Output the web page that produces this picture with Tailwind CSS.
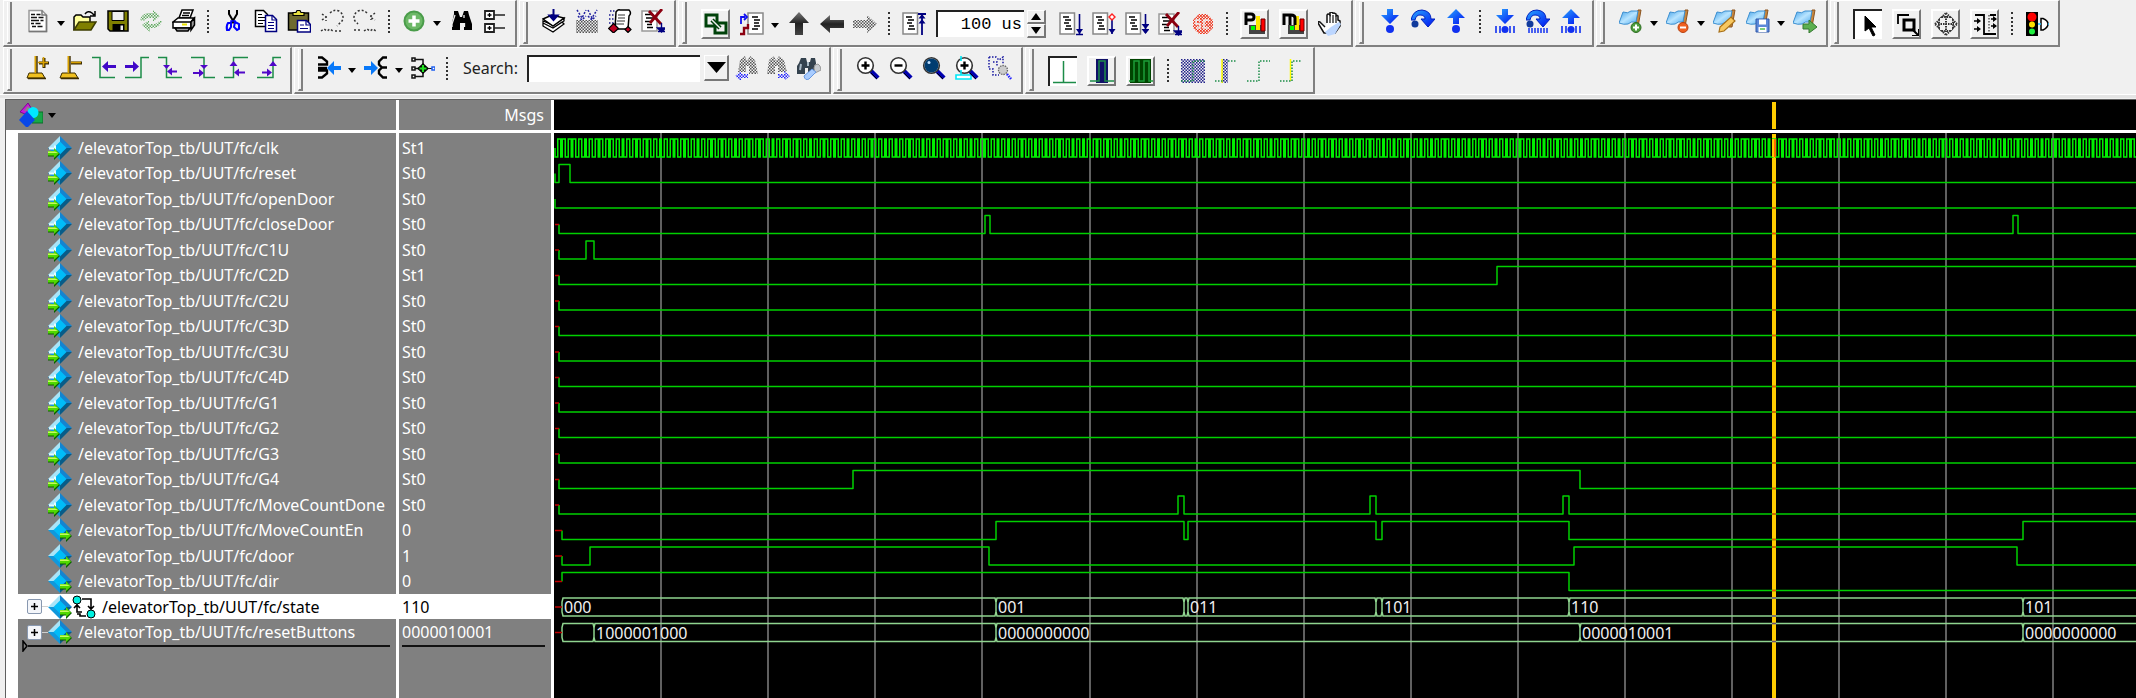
<!DOCTYPE html>
<html lang="en">

<head>
  <meta charset="UTF-8" />
  <meta name="viewport" content="width=device-width, initial-scale=1" />
  <title>Wave</title>
  <script src="https://cdn.jsdelivr.net/npm/@tailwindcss/browser@4"></script>
</head>

<body class="flex h-screen flex-col overflow-hidden bg-[#f0f0f0] font-['Noto_Sans','Open_Sans',sans-serif] text-black">

  <!-- Icon sprite -->
  <svg class="absolute size-0" xmlns="http://www.w3.org/2000/svg" aria-hidden="true">
    <defs>
      <pattern id="mesh" width="3" height="3" patternUnits="userSpaceOnUse"><path d="M0 0h1.5v1.5h-1.5zM1.5 1.5h1.5v1.5h-1.5z" fill="#555" /></pattern>
      <pattern id="meshBlue" width="3" height="3" patternUnits="userSpaceOnUse"><path d="M0 0h1.5v1.5h-1.5zM1.5 1.5h1.5v1.5h-1.5z" fill="#22228a" /></pattern>
      <pattern id="meshVivid" width="3" height="3" patternUnits="userSpaceOnUse"><path d="M0 0h1.5v1.5h-1.5zM1.5 1.5h1.5v1.5h-1.5z" fill="#2020ff" /></pattern>
      <pattern id="meshGreen" width="3" height="3" patternUnits="userSpaceOnUse"><path d="M0 0h1.5v1.5h-1.5zM1.5 1.5h1.5v1.5h-1.5z" fill="#5faa5f" /></pattern>
      <pattern id="meshRed" width="3" height="3" patternUnits="userSpaceOnUse"><path d="M0 0h1.8v1.8h-1.8zM1.5 1.5h1.5v1.5h-1.5z" fill="#f03820" /></pattern>
      <linearGradient id="steel" x1="0" y1="0" x2="0" y2="1"><stop offset="0" stop-color="#777" /><stop offset=".5" stop-color="#222" /><stop offset="1" stop-color="#444" /></linearGradient>
      <linearGradient id="azure" x1="0" y1="0" x2="1" y2="1"><stop offset="0" stop-color="#2aa8ff" /><stop offset="1" stop-color="#0010f0" /></linearGradient>
      <linearGradient id="sky" x1="0" y1="0" x2="1" y2="1"><stop offset="0" stop-color="#3c9ee8" /><stop offset=".5" stop-color="#b8e4ff" /><stop offset="1" stop-color="#4aa8ee" /></linearGradient>
    </defs>

    <symbol id="new" viewBox="0 0 24 24"><path d="M3 1.500h13l4.500 4.500v16.500h-17.500z" fill="#fff" stroke="#999" stroke-width="1.500" /><path d="M20.500 6v16.500h-17.500M16 1.500v4.500h4.500" fill="none" stroke="#777" stroke-width="1.500" /><path d="M5 5.500h4m1.500 0h4M5 8.500h6m1.500 0h5M5 11.500h8m1.500 0h3M5 14.500h3m1.500 0h5M6 17.500h4m1.500 0h5" stroke="#111" stroke-width="1.500" /></symbol>
    <symbol id="open" viewBox="0 0 24 24"><path d="M1 21v-13l2-2h5l2 2h7v5" fill="#ffff9c" stroke="#000" stroke-width="1.500" /><path d="M1 21l5-8h17l-5 8z" fill="#808000" stroke="#3c3c00" stroke-width="1.500" /><path d="M12 5q3-4 7-1l2 2M22 2v5h-5" fill="none" stroke="#000" stroke-width="1.500" /></symbol>
    <symbol id="save" viewBox="0 0 24 24"><path d="M2 2h20v20h-18l-2-2z" fill="#808000" stroke="#000" stroke-width="1.500" /><path d="M6 2.500h12v9h-12z" fill="#f0f0f0" stroke="#000" stroke-width="1" /><path d="M6.500 15h12v7h-12z" fill="#000" /><path d="M14.500 16.500h2.500v4.500h-2.500z" fill="#f0f0f0" /></symbol>
    <symbol id="reload" viewBox="0 0 24 24"><path d="M1 11q2-7 9-7h4v-3l7 6-7 6v-4h-3q-5 0-6 3zM23 12q-2 7-9 7h-3v4l-8-7 7-5v4h4q5 0 6-3z" fill="url(#meshGreen)" /></symbol>
    <symbol id="print" viewBox="0 0 24 24"><path d="M7 9l3-8h11l-3 8z" fill="#fff" stroke="#000" stroke-width="1.500" /><path d="M1 13l5-4h16l-3 4zM1 13h18v6h-18z" fill="#fff" stroke="#000" stroke-width="1.500" /><path d="M19 13l3.500-4v7l-3.500 5zM3 19h15l-2 3h-11z" fill="#999" stroke="#000" stroke-width="1.500" /><path d="M11 4h7m-8 2.500h7" stroke="#000" stroke-width="1.500" /><path d="M10 15.500h5" stroke="#e8e000" stroke-width="2" /></symbol>
    <symbol id="cut" viewBox="0 0 24 24"><path d="M8 1v4l6 10M16 1v4l-6 10" fill="none" stroke="#000" stroke-width="2" /><path d="M10 14v-2h4v2" fill="none" stroke="#00f" stroke-width="1.500" /><path d="M7 14h3v4l-2 3h-2q-1-4 1-7zM14 13l4 2v5l-2 1-3-3z" fill="none" stroke="#00f" stroke-width="2" /></symbol>
    <symbol id="copy" viewBox="0 0 24 24"><path d="M1.500 1.500h8l4 4v12h-12z" fill="#fff" stroke="#000" stroke-width="1.500" /><path d="M4 5.500h4m-4 3h7m-7 3h7m-7 3h5" stroke="#000" stroke-width="1.200" /><path d="M11.500 6.500h7l4 4v12h-11z" fill="#fff" stroke="#000080" stroke-width="1.500" /><path d="M18 7v4h4M14 13.500h6m-6 3h6m-6 3h6" fill="none" stroke="#000080" stroke-width="1.200" /></symbol>
    <symbol id="paste" viewBox="0 0 24 24"><path d="M1.500 4h20v17h-20z" fill="#6e6a30" stroke="#000" stroke-width="1.500" /><path d="M6 6.500v-3h3l1-2h3l1 2h3v3z" fill="#e8e040" stroke="#000" stroke-width="1.200" /><path d="M10.500 11.500h9l4 4v7.500h-13z" fill="#fff" stroke="#000080" stroke-width="1.500" /><path d="M19 12v4h4M13 16h4m-4 3.500h8" fill="none" stroke="#000080" stroke-width="1.200" /></symbol>
    <symbol id="undo" viewBox="0 0 24 24"><path d="M10 4q4-4 9-2 6 4 3 10l-5 5M2 5l4 3-4 3m4-4v5M1 22l3-2 3 2 3-2 3 2m2 0h8" fill="none" stroke="#333" stroke-width="1.500" stroke-dasharray="2 2" /></symbol>
    <symbol id="redo" viewBox="0 0 24 24"><path d="M14 4q-4-4-9-2-6 4-3 10l3 3M22 4l-5 4 5 3m-4-5v5M1 21h8m2 1l3-2 3 2 3-2 3 2" fill="none" stroke="#333" stroke-width="1.500" stroke-dasharray="2 2" /></symbol>
    <symbol id="add" viewBox="0 0 24 24"><circle cx="12" cy="12" r="9.500" fill="#6cb866" stroke="#4a9c4a" stroke-width="2" /><path d="M12 6.500v11m-5.500-5.500h11" stroke="#fff" stroke-width="3.500" /></symbol>
    <symbol id="find" viewBox="0 0 24 24"><path d="M5 2h4l2 6h2l2-6h4l1 4 3 9v6h-8v-7h-4v7h-8v-7l2-9z" fill="#000" /><path d="M6 6l-3 9v3M15 6v3M15.500 14v4" fill="none" stroke="#eee" stroke-width="1.300" /></symbol>
    <symbol id="tree" viewBox="0 0 24 24"><path d="M3 2h9v8h-9zM3 15h9v8h-9z" fill="#fff" stroke="#222" stroke-width="1.800" /><path d="M5.500 6h4m-2-2v4M5.500 19h4m-2-2v4" stroke="#000" stroke-width="1.300" /><path d="M12 6h11M12 19h11" stroke="#222" stroke-width="1.500" /></symbol>

    <symbol id="compile" viewBox="0 0 24 24"><path d="M1 17l10 6 11-8-2-2-9 6-10-5zM1 14l10 5 11-7v-3l-11 7-10-4z" fill="#fff" stroke="#000" stroke-width="1.300" /><path d="M1 10l9-4 12 3-11 8z" fill="#fff" stroke="#000" stroke-width="1.500" /><path d="M11.500 0v9M7.500 6.500l4 4.500 4-4.500z" stroke="#000080" stroke-width="2" fill="#000080" /></symbol>
    <symbol id="compileAll" viewBox="0 0 24 24"><path d="M1 11h22v13h-22z" fill="url(#mesh)" /><path d="M2 1l5 8 4-8m2 0l4 8 5-8M3 7l4 4 4-4m2 0l4 4 4-4" fill="none" stroke="#2020a0" stroke-width="1.500" stroke-dasharray="2 1.500" /></symbol>
    <symbol id="simulate" viewBox="0 0 24 24"><path d="M8 3q2-3 4-2h9q3 3 0 6l-1 13h-13z" fill="#fff" stroke="#000" stroke-width="1.500" /><path d="M10 6h7m-7 3h7m-8 3h8m-9 3h8" stroke="#333" stroke-width="1.200" /><path d="M2 2h5m-6 4h6m-6 4h5m-5 4h5" stroke="#1c1c90" stroke-width="1.500" stroke-dasharray="1.500 1.500" /><path d="M5.500 14.500l5 5-5 4.500-5-4.500zM20 17.500l3 3-3 3-3-3z" fill="#c00020" stroke="#000" stroke-width="1.200" /></symbol>
    <symbol id="breakSim" viewBox="0 0 24 24"><path d="M1 2h15v20h-15z" fill="#fff" stroke="#999" stroke-width="1.500" /><path d="M4 5.500h8m-7 3.500h7m-8 3.500h5m-3 3h5m-5 3h6" stroke="#000" stroke-width="1.600" /><path d="M8 2l12 13M21 0l-12 14" stroke="#8b0010" stroke-width="2.800" /><path d="M20.500 14v7M16.500 19h8l-4 4zM17 22.500h7" fill="#000080" stroke="#000080" stroke-width="1.400" /></symbol>
    <symbol id="link" viewBox="0 0 24 24"><path d="M2 3h11v11h-11z" fill="none" stroke="#00420a" stroke-width="3" /><path d="M11 11h11v10h-11z" fill="none" stroke="#00420a" stroke-width="3" /><path d="M8 8l8 8" stroke="#00420a" stroke-width="4.500" /><path d="M8 8l8 8" stroke="#f0f0f0" stroke-width="1.500" /></symbol>
    <symbol id="restart" viewBox="0 0 24 24"><path d="M8 1h15v21h-15z" fill="#fff" stroke="#888" stroke-width="1.500" /><path d="M12 5h6m-4 3h6m-6 3h5m-5 3h6m-8 3h6" stroke="#000" stroke-width="1.600" /><path d="M1 12v-7h4M4 2l3 3-3 3" fill="none" stroke="#1010f0" stroke-width="1.800" /><path d="M0 22h4v-6h4v-4" fill="none" stroke="#8b0010" stroke-width="2.400" /></symbol>
    <symbol id="up" viewBox="0 0 24 24"><path d="M12 0l10 11h-6v12h-8v-12h-6z" fill="url(#steel)" /></symbol>
    <symbol id="back" viewBox="0 0 24 24"><path d="M0 12l10-9v5h14v8h-14v5z" fill="url(#steel)" /></symbol>
    <symbol id="forward" viewBox="0 0 24 24"><path d="M24 12l-10-9v5h-14v8h14v5z" fill="url(#mesh)" /></symbol>
    <symbol id="sheet" viewBox="0 0 24 24"><path d="M1 1h14.500v21h-14.500z" fill="#fff" stroke="#888" stroke-width="1.500" /><path d="M4 5h6m-4 3h6m-7 3h5m-3 3h5m-6 3h7" stroke="#000" stroke-width="1.600" /></symbol>
    <symbol id="runStart" viewBox="0 0 24 24"><use href="#sheet" /><path d="M20 2v21M16 2h8" stroke="#000080" stroke-width="1.800" /><path d="M20 2l3.500 4.500h-7zM20 7l3.500 4.500h-7z" fill="#000080" /></symbol>
    <symbol id="run" viewBox="0 0 24 24"><use href="#sheet" /><path d="M20.500 2v21M17 22.500h7" stroke="#000080" stroke-width="1.600" /><path d="M20.500 22l3.500-5h-7z" fill="#000080" /></symbol>
    <symbol id="runNext" viewBox="0 0 24 24"><use href="#sheet" /><path d="M20 8v14" stroke="#000080" stroke-width="1.600" /><path d="M20 22l3.500-5h-7z" fill="#000080" /><path d="M20 2l3 3-3 3-3-3z" fill="#fff" stroke="#ff2020" stroke-width="1.400" /></symbol>
    <symbol id="runAll" viewBox="0 0 24 24"><use href="#sheet" /><path d="M20.500 2v19" stroke="#000080" stroke-width="1.600" /><path d="M20.500 17l4-5h-8zM20.500 22l4-5h-8z" fill="#000080" /></symbol>
    <symbol id="stop" viewBox="0 0 24 24"><path d="M8 2h8l6 6v8l-6 6h-8l-6-6v-8z" fill="url(#meshRed)" /><path d="M9 8h-4v4h4v4h-4M18 8h-5v8h5" fill="none" stroke="#f0f0f0" stroke-width="1.500" /></symbol>
    <symbol id="bars" viewBox="0 0 24 24"><path d="M6 13h16v9h-16z" fill="#444" /><path d="M8 14h4v4h-4z" fill="#0f0" /><path d="M13 4h4v14h-4z" fill="#ffe800" /><path d="M18 7h4v12h-4z" fill="#f00" stroke="#600" stroke-width="1" /></symbol>
    <symbol id="profile" viewBox="0 0 24 24"><use href="#bars" /><path d="M3 13v-11h5q3 0 3 3t-3 3h-5" fill="none" stroke="#000" stroke-width="3" /></symbol>
    <symbol id="memory" viewBox="0 0 24 24"><use href="#bars" /><path d="M2 13v-10h7q4 0 4 3v7M8 3v10" fill="none" stroke="#000" stroke-width="3" /></symbol>
    <symbol id="hand" viewBox="0 0 24 24"><path d="M7 15l-5-5q-2-1-2 1l6 10h11l5-7v-5l-2-1v-4q-2-2-2 1v-3q-3-2-3 0v-1q-3-2-3 0v2q-2-2-3 0v8" fill="#fff" stroke="#111" stroke-width="1.500" /><path d="M12 3v8m3-8v8m3-6v6" stroke="#111" stroke-width="1.200" /><path d="M7 20l6-5 8-5 2 2-6 10-7 2z" fill="#bcd6ff" /></symbol>

    <symbol id="stepInto" viewBox="0 0 24 24"><path d="M9 0h6v6h6l-9 9-9-9h6z" fill="url(#azure)" /><circle cx="12" cy="20" r="4" fill="#1030f0" /></symbol>
    <symbol id="stepOver" viewBox="0 0 24 24"><path d="M0 11q2-10 11-10 9 1 9 9h4l-7 8-7-8h4q0-4-5-4-4 0-5 5z" fill="url(#azure)" stroke="#0020c0" stroke-width="1" /><circle cx="4" cy="15" r="3.500" fill="#103a9c" /></symbol>
    <symbol id="stepOut" viewBox="0 0 24 24"><path d="M12 0l9 9h-6v6h-6v-6h-6z" fill="url(#azure)" /><circle cx="12" cy="20" r="4" fill="#1030f0" /></symbol>
    <symbol id="ticks" viewBox="0 0 24 24"><path d="M3 17v7m4-7v7m10-7v7m4-7v7" stroke="#1030f0" stroke-width="1.600" /><circle cx="12" cy="20.500" r="3.500" fill="#1030f0" /></symbol>
    <symbol id="intoAll" viewBox="0 0 24 24"><path d="M9 0h6v6h6l-9 9-9-9h6z" fill="url(#azure)" /><use href="#ticks" /></symbol>
    <symbol id="overAll" viewBox="0 0 24 24"><use href="#stepOver" /><path d="M3 19v5m3-5v5m3-5v5m3-5v5m3-5v5m3-5v5m3-5v5" stroke="#1030f0" stroke-width="1.500" /></symbol>
    <symbol id="outAll" viewBox="0 0 24 24"><path d="M12 0l9 9h-6v6h-6v-6h-6z" fill="url(#azure)" /><use href="#ticks" /></symbol>

    <symbol id="flag" viewBox="0 0 24 24"><path d="M19 1h3l-3 17h-3z" fill="#c8863c" stroke="#8a5420" stroke-width="1" /><path d="M4 3q5 2 8-1h7l-2 11q-5-1-8 2-4 1-9-1z" fill="url(#sky)" stroke="#3c8fd0" stroke-width="1" /></symbol>
    <symbol id="flagAdd" viewBox="0 0 24 24"><use href="#flag" /><circle cx="17" cy="18.500" r="5" fill="#4c9c3c" stroke="#2c6c20" stroke-width="1" /><path d="M17 15.500v6m-3-3h6" stroke="#fff" stroke-width="2" /></symbol>
    <symbol id="flagRemove" viewBox="0 0 24 24"><use href="#flag" /><circle cx="17" cy="18.500" r="5" fill="#f06020" stroke="#b84010" stroke-width="1" /><path d="M14 18.500h6" stroke="#fff" stroke-width="2" /></symbol>
    <symbol id="flagEdit" viewBox="0 0 24 24"><use href="#flag" /><path d="M6 23l1-5 11-10 4 4-11 10z" fill="#f8c860" stroke="#a87018" stroke-width="1.200" /></symbol>
    <symbol id="flagSave" viewBox="0 0 24 24"><use href="#flag" /><path d="M10 10h13v13h-13z" fill="#5c88d8" stroke="#3058a8" stroke-width="1" /><path d="M13 10.500h7v5h-7zM12.500 18h8v5h-8z" fill="#fff" /><path d="M14 20h5" stroke="#50c050" stroke-width="1.500" /></symbol>
    <symbol id="flagGo" viewBox="0 0 24 24"><use href="#flag" /><path d="M10 15h6v-4l8 7-8 6v-4h-6z" fill="#5cb050" stroke="#347830" stroke-width="1" /></symbol>

    <symbol id="pointer" viewBox="0 0 24 24"><path d="M8 3v15l4-3 4 8 2-1-4-8h5z" fill="#000" stroke="#000" stroke-width="1" /></symbol>
    <symbol id="zoomMode" viewBox="0 0 24 24"><path d="M3 12v-9h11" fill="none" stroke="#000" stroke-width="1.800" /><path d="M9 8h10v10h-10z" fill="none" stroke="#000" stroke-width="3" /><path d="M17 17l6 6M24 17v7h-7" fill="none" stroke="#000" stroke-width="2" /></symbol>
    <symbol id="panMode" viewBox="0 0 24 24"><path d="M12 1l4 4h-8zM12 23l4-4h-8zM1 12l4-4v8zM23 12l-4-4v8zM12 4v16M4 12h16" fill="none" stroke="#333" stroke-width="2" stroke-dasharray="1.500 1" /></symbol>
    <symbol id="twoMode" viewBox="0 0 24 24"><path d="M2 3h9v19h12M17 3h6" fill="none" stroke="#000" stroke-width="1.800" /><path d="M16 3v18" stroke="#555" stroke-width="1.500" stroke-dasharray="1.500 1.500" /><path d="M1 9h5M1 17h5M18 7h5M18 14h5" stroke="#000" stroke-width="1.600" /><path d="M4 6l4 3-4 3zM4 14l4 3-4 3zM20 4l4 3-4 3zM20 11l4 3-4 3z" fill="#000" /></symbol>
    <symbol id="traffic" viewBox="0 0 24 24"><path d="M1 0h12v24h-12z" fill="#000" /><circle cx="7" cy="5" r="4.500" fill="#f00" /><circle cx="7" cy="12.500" r="3" fill="#ffe000" /><circle cx="7" cy="19.500" r="3" fill="#20f040" /><path d="M16 6.500h2q5 2 5 5.500t-5 6h-2z" fill="#fff" stroke="#000" stroke-width="1.500" /><path d="M13 12h3m7 0h1" stroke="#20c0ff" stroke-width="1.500" /></symbol>

    <symbol id="cursorBase" viewBox="0 0 24 24"><path d="M3 17h13l3 5h-18z" fill="#f0c020" stroke="#3c2c00" stroke-width="1" /><path d="M9.500 0v17" stroke="#d8a000" stroke-width="2" /><path d="M11 0v17M2 22.500h18" stroke="#3c2c00" stroke-width="1.400" /></symbol>
    <symbol id="cursorAdd" viewBox="0 0 24 24"><use href="#cursorBase" /><path d="M13 7h10M18 2v10" stroke="#3c2c00" stroke-width="3" /><path d="M12 6.500h10M17.500 1v10" stroke="#d8a000" stroke-width="1.600" /></symbol>
    <symbol id="cursorDel" viewBox="0 0 24 24"><use href="#cursorBase" /><path d="M12 7h11" stroke="#3c2c00" stroke-width="3" /><path d="M12 6.500h10" stroke="#d8a000" stroke-width="1.600" /></symbol>
    <symbol id="prevEdge" viewBox="0 0 24 24"><path d="M0 1.500h8v20h15" fill="none" stroke="#1c8c48" stroke-width="1.500" /><path d="M10 10.500l6-5.500v4h8v3h-8v4z" fill="#4008c8" /></symbol>
    <symbol id="nextEdge" viewBox="0 0 24 24"><path d="M0 21.500h16v-20h8" fill="none" stroke="#1c8c48" stroke-width="1.500" /><path d="M14 10.500l-6-5.500v4h-8v3h8v4z" fill="#4008c8" /></symbol>
    <symbol id="prevFall" viewBox="0 0 24 24"><path d="M0 1.500h8.500v20h15.500" fill="none" stroke="#1c8c48" stroke-width="1.500" /><path d="M8.500 13l-3.500-4h7zM9 15.500l5-4v3h5v2h-5v3z" fill="#5008c8" /></symbol>
    <symbol id="nextFall" viewBox="0 0 24 24"><path d="M0 1.500h13v20h11" fill="none" stroke="#1c8c48" stroke-width="1.500" /><path d="M13 13l-4-4h8zM13 17l-5-4v3h-6v2h6v3z" fill="#5008c8" /></symbol>
    <symbol id="prevRise" viewBox="0 0 24 24"><path d="M0 21.500h9.500v-20h14.500" fill="none" stroke="#1c8c48" stroke-width="1.500" /><path d="M9.500 5l4 5h-8zM10 16.500l5-4v3h6v2h-6v3z" fill="#5008c8" /></symbol>
    <symbol id="nextRise" viewBox="0 0 24 24"><path d="M0 21.500h16v-20h8" fill="none" stroke="#1c8c48" stroke-width="1.500" /><path d="M16 5l4 5h-8zM15 16.500l-5-4v3h-5v2h5v3z" fill="#5008c8" /></symbol>
    <symbol id="drivers" viewBox="0 0 24 24"><path d="M1 1.500h4l5 4v3h-9M1 21.500h4l5-4v-3h-9M1 12h9" fill="none" stroke="#000" stroke-width="2.400" /><path d="M10 12l7-7v5h7v4h-7v5z" fill="#0878f8" /></symbol>
    <symbol id="readers" viewBox="0 0 24 24"><path d="M23 1.500h-4l-4 4v3l3 3h5M23 21.500h-4l-4-4v-3l3-3" fill="none" stroke="#000" stroke-width="2.400" /><path d="M14 12l-7-7v5h-7v4h7v5z" fill="#0878f8" /></symbol>
    <symbol id="expand" viewBox="0 0 24 24"><path d="M1 2h3v3h-3zM1 11h3v3h-3zM1 19h3v3h-3zM4 3.500h8v17h-8M4 12.500h7" fill="none" stroke="#111" stroke-width="1.500" /><path d="M12 7l6 5.500-6 5.500-6-5.500z" fill="#000" /><path d="M12 9v7m-3.500-3.500h7" stroke="#20e020" stroke-width="2.200" /><path d="M17 12.500h4" stroke="#111" /><path d="M21 11h3v3h-3z" fill="#fff" stroke="#2060f0" stroke-width="1.500" /></symbol>
    <symbol id="findPrev" viewBox="0 0 24 24"><path d="M5 4l5-4 2 5 3-5 5 4 3 14h-9v-8h-3v6h-8z" fill="url(#mesh)" /><path d="M0 20l6-5v3h7v4h-7v3z" fill="url(#meshVivid)" /></symbol>
    <symbol id="findNext" viewBox="0 0 24 24"><path d="M3 4l5-4 2 5 3-5 5 4 3 12h-9v-6h-3v8h-8z" fill="url(#mesh)" /><path d="M24 20l-6-5v3h-6v4h6v3z" fill="url(#meshVivid)" /></symbol>
    <symbol id="findOpts" viewBox="0 0 24 24"><path d="M4 2h5l1 4h3l1-4h4l1 5v9h-8v-4h-3v6h-8v-8l2-3z" fill="#34424e" /><path d="M4 8l-1 6m8-8v4" stroke="#a8b8c4" stroke-width="2" /><path d="M17 12q0-4 4-4l2 2 1 4-6 3z" fill="#c8ccd0" stroke="#999" stroke-width="1" /><path d="M7 20l8-7 4 3-7 7q-4 2-5-3z" fill="#a8ccff" stroke="#6898e0" stroke-width="1" /></symbol>
    <symbol id="lens" viewBox="0 0 24 24"><path d="M15 15l7 7" stroke="#0000b0" stroke-width="4.500" /><path d="M15 17l6 6" stroke="#000" stroke-width="1" /><circle cx="9.500" cy="9.500" r="7.800" fill="#fff" stroke="#333" stroke-width="1.600" /></symbol>
    <symbol id="zoomIn" viewBox="0 0 24 24"><use href="#lens" /><path d="M9.500 5.500v8m-4-4h8" stroke="#000" stroke-width="2.400" /></symbol>
    <symbol id="zoomOut" viewBox="0 0 24 24"><use href="#lens" /><path d="M5.500 9.500h8" stroke="#000" stroke-width="2.400" /></symbol>
    <symbol id="zoomFull" viewBox="0 0 24 24"><use href="#lens" /><circle cx="9.500" cy="9.500" r="7" fill="#003c70" /><circle cx="7" cy="6.500" r="1.500" fill="#c0e0ff" /></symbol>
    <symbol id="zoomCursor" viewBox="0 0 24 24"><path d="M1 19h15v4h-15z" fill="#fff" stroke="#00e8f8" stroke-width="1.600" /><use href="#lens" /><path d="M9.500 5.500v8m-4-4h8" stroke="#000" stroke-width="2.400" /><path d="M6 0v5m0 9v5" stroke="#00e8f8" stroke-width="1.600" /></symbol>
    <symbol id="zoomOther" viewBox="0 0 24 24"><path d="M1 1h7l3 3 4-3v7M1 1v12h4v6h6M5 6h4v5" fill="none" stroke="#1818a0" stroke-width="1.500" stroke-dasharray="1.500 1.500" /><circle cx="15" cy="14" r="4.500" fill="#ccc" stroke="#666" stroke-width="1.300" stroke-dasharray="1.500 1" /><path d="M19 18l4 5" stroke="#2020ff" stroke-width="2.500" stroke-dasharray="1.500 1" /></symbol>

    <symbol id="waveLine" viewBox="0 0 24 24"><path d="M11.500 1v21M1 22.500h23" stroke="#1c8c48" stroke-width="1.500" /></symbol>
    <symbol id="waveBlue" viewBox="0 0 24 24"><path d="M6 0h12v24h-12z" fill="#101068" /><path d="M0 22h9v-20h6v20h9" fill="none" stroke="#1c8c48" stroke-width="1.500" /></symbol>
    <symbol id="waveGreen" viewBox="0 0 24 24"><path d="M1 0h21v24h-21z" fill="#004400" /><path d="M0 22h5v-20h5v20h5v-20h5v20h4" fill="none" stroke="#1c9c38" stroke-width="1.500" /></symbol>
    <symbol id="patBlock" viewBox="0 0 24 24"><path d="M0 0h24v24h-24z" fill="url(#meshBlue)" /><path d="M0 22h12v-20h12" fill="none" stroke="#1c8c48" stroke-width="1.500" stroke-dasharray="1.500 1.500" /></symbol>
    <symbol id="patStrip" viewBox="0 0 24 24"><path d="M8 0h6v24h-6z" fill="url(#meshBlue)" /><path d="M8 0v24" stroke="#ffff00" stroke-width="1.500" /><path d="M1 22h8M14 2h8" fill="none" stroke="#1c8c48" stroke-width="1.500" stroke-dasharray="1.500 1.500" /></symbol>
    <symbol id="patStep" viewBox="0 0 24 24"><path d="M0 22h12v-20h11" fill="none" stroke="#1c8c48" stroke-width="1.500" stroke-dasharray="1.500 1.500" /></symbol>
    <symbol id="patEdge" viewBox="0 0 24 24"><path d="M10.500 0v22" stroke="#ffff00" stroke-width="1.500" /><path d="M0 22h12v-20h10" fill="none" stroke="#1c8c48" stroke-width="1.500" stroke-dasharray="1.500 1.500" /></symbol>

    <symbol id="diamond" viewBox="0 0 24 24"><path d="M12 0l12 12h-12z" fill="#1484d0" /><path d="M12 0v12h-12z" fill="#a8e4f8" /><path d="M12 24l12-12h-12z" fill="#085c88" /><path d="M12 24l-12-12h12z" fill="#1098dc" /><path d="M12 5.500l6.500 6.500-6.500 6.500-6.500-6.500z" fill="#00bcf8" /></symbol>
    <symbol id="smallArrow" viewBox="0 0 12 12"><path d="M0 3.500h6v-3l6 5.500-6 6v-3.500h-6z" fill="#0a5c00" /><path d="M0 3h6v-3l5 5.500-5 4.500v-2.500h-6z" fill="#50d800" /><path d="M0 3.500h7l3 1.500h-10z" fill="#c8f860" /></symbol>
    <symbol id="portIn" viewBox="0 0 24 24"><use href="#diamond" /><path d="M1 12.500h6v-3" stroke="#e8fcff" stroke-width="2" fill="none" /><use href="#smallArrow" x="0" y="12" width="12" height="12" /></symbol>
    <symbol id="portOut" viewBox="0 0 24 24"><use href="#diamond" /><use href="#smallArrow" x="12" y="12" width="12" height="12" /></symbol>
    <symbol id="fsm" viewBox="0 0 24 24"><path d="M5 9v8h5m-8-4l3-3 3 3M10 4h9v10m-3-3l3 3 3-3M5 19h3v2h6" fill="none" stroke="#000" stroke-width="1.600" /><circle cx="5" cy="5" r="4" fill="#00f0e0" stroke="#000" stroke-width="1" /><circle cx="19" cy="19" r="4" fill="#00f0e0" stroke="#000" stroke-width="1" /></symbol>
    <symbol id="objects" viewBox="0 0 24 24"><path d="M1 9l8-9 5 8-8 3z" fill="#c818d8" stroke="#7c0890" stroke-width="1" /><path d="M5 8l4-5 3 4z" fill="#888" /><path d="M13 9h11v11h-11z" fill="#18a848" stroke="#0a6c28" stroke-width="1" /><circle cx="14" cy="9.500" r="5.500" fill="#00e8ff" /><path d="M8 8l8 9-8 8-8-8z" fill="#0848e8" /></symbol>
  </svg>

  <!-- Toolbars -->
  <div id="toolbars" class="shrink-0 pl-[3px]"></div>
  <div class="mb-px h-[4px] shrink-0 border-t border-white bg-[#e4e4e4]"></div>

  <!-- Wave window -->
  <main class="ml-[5px] flex min-h-0 flex-1 border-t border-l border-[#606060] bg-[#808080]">

    <div class="flex w-[548px] shrink-0 flex-col">
      <table class="w-full table-fixed border-separate border-spacing-0 text-left text-[16px] leading-5 whitespace-nowrap text-white">
        <colgroup>
          <col class="w-[12px]" />
          <col class="w-[381px]" />
          <col />
        </colgroup>
        <thead>
          <tr class="h-[33px]">
            <th colspan="2" class="border-r-[3px] border-b-[3px] border-white p-0 pl-[13px]">
              <button class="flex items-center gap-[5px]" aria-label="Window menu">
                <svg class="size-6"><use href="#objects" /></svg>
                <svg class="h-[5px] w-[8px]" viewBox="0 0 8 5"><path d="M0 0h8l-4 5z" /></svg>
              </button>
            </th>
            <th class="border-r-[3px] border-b-[3px] border-white p-0 pr-[7px] text-right font-normal">Msgs</th>
          </tr>
          <tr class="h-[2px]">
            <td class="bg-white p-0"></td>
            <td class="border-r-[3px] border-white p-0"></td>
            <td class="border-r-[3px] border-white p-0"></td>
          </tr>
        </thead>
        <tbody id="signals"></tbody>
      </table>

      <!-- Insertion marker, on the lower edge of the last signal -->
      <div class="flex flex-1">
        <div class="w-[12px] bg-white"></div>
        <div class="w-[381px] border-r-[3px] border-white">
          <div class="-mt-[5px] mr-[6px] ml-[4px] flex items-center">
            <svg class="h-[12px] w-[6px]" viewBox="0 0 6 12"><path d="M1 1l4 5-4 5z" fill="none" stroke="#000" stroke-width="1.500" /></svg>
            <div class="h-[2px] flex-1 bg-[#111]"></div>
          </div>
        </div>
        <div class="flex-1 border-r-[3px] border-white">
          <div class="mr-[6px] ml-[3px] h-[2px] bg-[#111]"></div>
        </div>
      </div>
    </div>

    <section class="flex min-w-0 flex-1 flex-col bg-black">
      <svg id="ruler" class="h-[30px] w-full shrink-0"></svg>
      <div class="h-[3px] shrink-0 bg-white"></div>
      <svg id="wave" class="min-h-0 w-full flex-1 font-['Noto_Sans','Open_Sans',sans-serif] text-[16px]"></svg>
    </section>
  </main>

  <script>
    // '|' separator, 'v' drop-down arrow, '^x' raised button, '_x' pressed button
    const toolbars = [
      [
        ['new', 'v', 'open', 'save', 'reload', 'print', '|', 'cut', 'copy', 'paste', 'undo', 'redo', '|', 'add', 'v', 'find', 'tree'],
        ['compile', 'compileAll', 'simulate', 'breakSim'],
        ['^link', 'restart', 'v', 'up', 'back', 'forward', '|', 'runStart', 'RUNLENGTH', 'run', 'runNext', 'runAll', 'breakSim', 'stop', '|', '^profile', '^memory', 'hand'],
        ['stepInto', 'stepOver', 'stepOut', '|', 'intoAll', 'overAll', 'outAll'],
        ['flagAdd', 'v', 'flagRemove', 'v', 'flagEdit', 'flagSave', 'v', 'flagGo'],
        ['_pointer', '^zoomMode', '^panMode', '^twoMode', '|', 'traffic'],
      ],
      [
        ['cursorAdd', 'cursorDel', 'prevEdge', 'nextEdge', 'prevFall', 'nextFall', 'prevRise', 'nextRise'],
        ['drivers', 'v', 'readers', 'v', 'expand', '|', 'SEARCH', 'findPrev', 'findNext', 'findOpts'],
        ['zoomIn', 'zoomOut', 'zoomFull', 'zoomCursor', 'zoomOther'],
        ['_waveLine', '^waveBlue', '^waveGreen', '|', 'patBlock', 'patStrip', 'patStep', 'patEdge'],
      ],
    ];

    const runLength = `
      <input aria-label="Run length" value="100 us" class="ml-[6px] h-[27px] w-[88px] border-t-2 border-l-2 border-[#222] bg-white pr-[2px] text-right font-['Liberation_Mono',monospace] text-[17px] outline-none" />
      <span class="mr-[8px] ml-[3px] flex h-[28px] w-[19px] flex-col">
        <button aria-label="Increase" class="grid flex-1 place-items-center border-t border-r-2 border-b-2 border-l border-t-white border-r-[#777] border-b-[#777] border-l-white"><svg class="h-[7px] w-[10px]" viewBox="0 0 10 7"><path d="M5 0l5 7h-10z" /></svg></button>
        <button aria-label="Decrease" class="grid flex-1 place-items-center border-t border-r-2 border-b-2 border-l border-t-white border-r-[#777] border-b-[#777] border-l-white"><svg class="h-[7px] w-[10px]" viewBox="0 0 10 7"><path d="M5 7l5-7h-10z" /></svg></button>
      </span>`;

    const search = `
      <label for="search" class="ml-[8px] w-[64px] text-[16px] leading-6 text-[#222]">Search:</label>
      <input id="search" class="h-[27px] w-[173px] border-t-2 border-l-2 border-[#222] bg-white px-1 text-[16px] outline-none" />
      <button aria-label="Search history" class="mr-[2px] ml-[4px] grid h-[26px] w-[25px] place-items-center border-t border-r-2 border-b-2 border-l border-t-white border-r-[#777] border-b-[#777] border-l-white"><svg class="h-[11px] w-[19px]" viewBox="0 0 19 11"><path d="M0 0h19l-9.500 11z" /></svg></button>`;

    function toolItem(item) {
      if (item === '|') return '<span class="flex h-[23px] w-[16px] justify-center"><span class="border-l-2 border-dotted border-[#333]"></span></span>';
      if (item === 'v') return '<button aria-label="More" class="grid w-[14px] place-items-center pt-1"><svg class="h-[5px] w-[8px]" viewBox="0 0 8 5"><path d="M0 0h8l-4 5z" /></svg></button>';
      if (item === 'RUNLENGTH') return runLength;
      if (item === 'SEARCH') return search;
      const name = item.replace(/^[\^_]/, '');
      const icon = `<svg class="size-6"><use href="#${name}" /></svg>`;
      if (item[0] === '^') return `<button aria-label="${name}" class="mx-[5px] grid h-[30px] w-[29px] place-items-center border-t-2 border-r-2 border-b-2 border-l-2 border-t-white border-r-[#777] border-b-[#777] border-l-white">${icon}</button>`;
      if (item[0] === '_') return `<button aria-label="${name}" aria-pressed="true" class="mx-[5px] grid h-[30px] w-[29px] place-items-center border-t-2 border-l-2 border-[#222] bg-white">${icon}</button>`;
      return `<button aria-label="${name}" class="${/^find./.test(name) ? 'w-[31px]' : 'w-[33px]'} grid place-items-center">${icon}</button>`;
    }

    document.getElementById('toolbars').innerHTML = toolbars.map(row => `
      <div class="flex gap-[2px]">
        ${row.map(group => {
          const tall = group.some(i => /^[\^_]/.test(i));
          return `
          <div role="toolbar" class="flex h-[47px] shrink-0 border-t border-r-2 border-b-2 border-l border-t-white border-r-[#808080] border-b-[#808080] border-l-white pr-[5px]">
            <span class="mt-px mr-[9px] ml-[3px] h-[42px] w-[5px] border-r-2 border-b-2 border-l border-r-[#808080] border-b-[#808080] border-l-white"></span>
            <div class="${tall ? 'mt-[7px] h-[31px]' : 'mt-[6px] h-[28px]'} flex items-center">${group.map(toolItem).join('')}</div>
          </div>`;
        }).join('')}
      </div>`).join('');

    // x: end of the unknown part (red), start: first x of a signal without one, flips: x of every change
    const signals = [
      { name: 'clk', value: 'St1', clock: true },
      { name: 'reset', value: 'St0', start: 1, flips: [5, 16] },
      { name: 'openDoor', value: 'St0', start: 1, flips: [] },
      { name: 'closeDoor', value: 'St0', x: 5, flips: [431, 436, 1459, 1464] },
      { name: 'C1U', value: 'St0', x: 5, flips: [32, 40] },
      { name: 'C2D', value: 'St1', x: 5, flips: [943] },
      { name: 'C2U', value: 'St0', x: 5, flips: [] },
      { name: 'C3D', value: 'St0', x: 5, flips: [] },
      { name: 'C3U', value: 'St0', x: 5, flips: [] },
      { name: 'C4D', value: 'St0', x: 5, flips: [] },
      { name: 'G1', value: 'St0', x: 5, flips: [] },
      { name: 'G2', value: 'St0', x: 5, flips: [] },
      { name: 'G3', value: 'St0', x: 5, flips: [] },
      { name: 'G4', value: 'St0', x: 5, flips: [299, 1026] },
      { name: 'MoveCountDone', value: 'St0', x: 5, flips: [624, 630, 816, 822, 1009, 1015] },
      { name: 'MoveCountEn', value: '0', out: true, x: 8, flips: [442, 630, 634, 822, 828, 1015, 1469] },
      { name: 'door', value: '1', out: true, x: 8, flips: [36, 435, 1020, 1463] },
      { name: 'dir', value: '0', out: true, x: 8, high: true, flips: [1015] },
      { name: 'state', value: '110', out: true, selected: true, bus: [[8, '000'], [442, '001'], [630, ''], [634, '011'], [822, ''], [828, '101'], [1015, '110'], [1469, '101']] },
      { name: 'resetButtons', value: '0000010001', out: true, bus: [[8, ''], [40, '1000001000'], [442, '0000000000'], [1026, '0000010001'], [1469, '0000000000']] },
    ];

    document.getElementById('signals').innerHTML = signals.map(s => `
      <tr class="odd:h-[25px] even:h-[26px] ${s.selected ? 'text-black' : ''}">
        <td class="bg-white p-0"></td>
        <td class="border-r-[3px] border-white p-0 ${s.selected ? 'bg-white' : ''}">
          <div class="flex h-6 items-center">
            ${s.bus
              ? '<button aria-label="Expand" class="ml-[9px] grid size-[15px] place-items-center rounded-xs border border-[#8898b0] bg-[#f4f6fa]"><svg class="size-[9px]" viewBox="0 0 9 9"><path d="M4.500 1v7M1 4.500h7" stroke="#000" stroke-width="1.500" /></svg></button><span class="w-[6px] border-t border-[#d0d0d0]"></span>'
              : '<span class="w-[30px]"></span>'}
            <svg class="size-6"><use href="${s.out ? '#portOut' : '#portIn'}" /></svg>
            ${s.selected ? '<svg class="size-6"><use href="#fsm" /></svg>' : ''}
            <span class="ml-[6px]">/elevatorTop_tb/UUT/fc/${s.name}</span>
          </div>
        </td>
        <td class="border-r-[3px] border-white p-0 pl-[3px] ${s.selected ? 'bg-white' : ''}">${s.value}</td>
      </tr>`).join('');

    const END = 4000;
    const PITCH = 25.5;
    const CURSOR = 1220;

    function clockPath(low) {
      let d = `M1 ${low - 9}V${low}`;
      for (let k = 1; k * 2.6775 < END; k++) {
        const x = Math.round(k * 1.785) * 1.5 + 0.75;
        d += `H${x}V${k % 2 ? low - 18 : low}`;
      }
      return d;
    }

    function levelPath(s, low) {
      const x = s.x || s.start;
      let high = !!s.high;
      let d = `M${x} ${low - 9}V${high ? low - 18 : low}`;
      s.flips.forEach(f => {
        high = !high;
        d += `H${f}V${high ? low - 18 : low}`;
      });
      return d + `H${END}`;
    }

    function busShape(s, low) {
      return s.bus.map(([x, label], i) => {
        const end = i + 1 < s.bus.length ? s.bus[i + 1][0] : END;
        const top = low - 18;
        return `<path d="M${x} ${low - 9}V${top + 4}L${x + 1} ${top}H${end - 1}L${end} ${top + 4}M${x} ${low - 9}V${low - 4}L${x + 1} ${low}H${end - 1}L${end} ${low - 4}" fill="none" stroke="#8fd48f" stroke-width="1.500" />
          <text x="${x + 2}" y="${low - 3}" fill="#f0f0f0">${label}</text>`;
      }).join('');
    }

    let shapes = '';
    for (let i = 1; i < 38; i++) shapes += `<path d="M${Math.round(i * 107.1)} 0V2000" stroke="#808080" stroke-width="1.500" />`;
    shapes += `<path d="M${CURSOR} 1V2000" stroke="#ffcc00" stroke-width="4" />`;
    signals.forEach((s, i) => {
      const low = 24 + i * PITCH;
      if (s.clock) shapes += `<path d="${clockPath(low)}" fill="none" stroke="#00f000" stroke-width="1.500" />`;
      else if (s.bus) shapes += busShape(s, low);
      else shapes += `<path d="${levelPath(s, low)}" fill="none" stroke="#00d000" stroke-width="1.500" stroke-linejoin="round" />`;
      if (s.x || s.bus) shapes += `<path d="M1 ${low - 9}H${s.x || 8}" stroke="#c00000" stroke-width="1.500" />`;
      // traces turn red where the cursor crosses them
      const high = s.flips && (s.flips.filter(f => f < CURSOR).length % 2 === 1) !== !!s.high;
      if (s.flips) shapes += `<path d="M${CURSOR - 2} ${high ? low - 18 : low}h4" stroke="#ff4800" stroke-width="1.500" />`;
      if (s.clock) shapes += `<path d="M${CURSOR} ${low - 18}V${low}" stroke="#ffcc00" stroke-width="4" /><path d="M${CURSOR + 1} ${low - 18}V${low}" stroke="#ff4800" stroke-width="1.500" />`;
      if (s.bus) shapes += `<path d="M${CURSOR - 2} ${low - 18}h4M${CURSOR - 2} ${low}h4" stroke="#70506c" stroke-width="1.500" />`;
    });
    document.getElementById('wave').innerHTML = shapes;
    document.getElementById('ruler').innerHTML = `<path d="M${CURSOR} 2V29" stroke="#ffcc00" stroke-width="4" />`;
  </script>

</body>

</html>
